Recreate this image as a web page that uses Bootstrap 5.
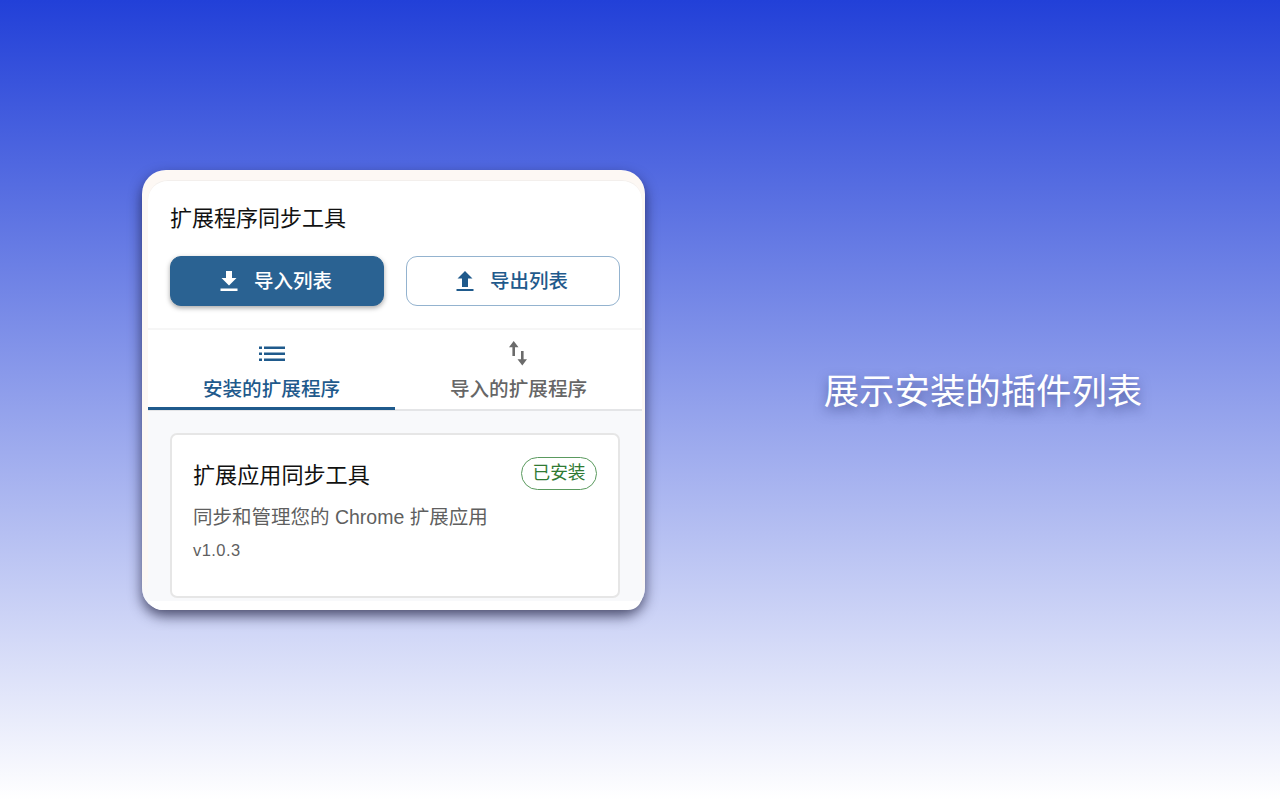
<!DOCTYPE html>
<html lang="zh-CN">
<head>
<meta charset="utf-8">
<title>扩展程序同步工具</title>
<link href="https://cdn.jsdelivr.net/npm/bootstrap@5.3.0/dist/css/bootstrap.min.css" rel="stylesheet">
<style>
html,body{height:100%}
body{font-family:"Liberation Sans","Noto Sans CJK SC",sans-serif;background:linear-gradient(180deg,#2240d8 0%,#ffffff 100%);overflow:hidden}
.stage{width:1280px;height:800px;padding:170px 0 190px 142px}
.shell{width:503px;height:440px;flex:none;background:linear-gradient(180deg,#fdf8f4 0%,#fdf8f4 92%,#f8f9fb 97%);border-radius:24px 24px 22px 22px;padding:10px 3px 0 6px;box-shadow:0 6px 13px rgba(15,15,45,.68)}
.pane{background:#fff;height:100%;border-top:1px solid #f3efec;overflow:hidden;border-radius:20px 20px 14px 14px}
.head-zone{padding:0 22px 22px;height:149px;border-bottom:2px solid #f6f6f6}
.app-title{font-size:22px;line-height:30px;color:#111;padding-top:23px;margin:0 0 22px;font-weight:400}
.act-row{gap:22px}
.act-btn{width:214px;height:50px;font-size:19.5px;font-weight:500;border-radius:11px;gap:16px;padding:0 2px 0 0}
.act-label{padding-top:2px}
.act-fill{background:#2a6292;color:#fff;border:1px solid #2a6292;box-shadow:0 2px 5px rgba(0,0,0,.35)}
.act-fill:hover{background:#2a6292;color:#fff}
.act-line{background:#fff;color:#1f5a8c;border:1.5px solid #94b3cf}
.tab-row{height:81px;border-bottom:2px solid #e4e5e7;background:#fff}
.tab-item{flex:0 0 50%;height:80px;color:#666;font-size:19.6px;font-weight:500;border-bottom:3px solid transparent;padding-top:9px;line-height:26px}
.tab-item.on{color:#1f5a8c;border-bottom-color:#1f5a8c}
.tab-glyph{height:28px;margin-bottom:9px}
.body-zone{background:#f8f9fb;padding:22px 22px 0;height:190px}
.app-card{width:450px;height:165px;background:#fff;border:2px solid #e6e6e6;border-radius:7px;padding:22px 21px 0}
.app-name{font-size:22.1px;line-height:30px;color:#111;margin:4px 0 0;font-weight:400}
.state-tag{width:76px;height:33px;font-size:17.7px;line-height:1;color:#2f7a33;border:1.5px solid #5a9a5e;border-radius:17px}
.app-desc{font-size:19.5px;line-height:28px;color:#5f5f5f;margin:12px 0 0}
.app-ver{font-size:16.5px;line-height:22px;color:#5f5f5f;margin:8px 0 0;letter-spacing:.45px}
.hero-text{flex:1;padding:4px 0 0 41px;text-align:center;font-size:35.4px;line-height:44px;color:#fff;text-shadow:0 5px 12px rgba(20,30,90,.55)}
</style>
</head>
<body>
<div class="stage d-flex align-items-center">
  <div class="shell">
    <div class="pane">
      <div class="head-zone">
        <h1 class="app-title">扩展程序同步工具</h1>
        <div class="d-flex act-row">
          <button class="btn act-btn act-fill d-flex align-items-center justify-content-center" type="button">
            <svg width="18" height="20" viewBox="0 0 18 20" aria-hidden="true"><path fill="#fff" d="M6 0h6v7h4.500L9 14.500 1.500 7H6zM.5 17.500h17V20H.5z"/></svg>
            <span class="act-label">导入列表</span>
          </button>
          <button class="btn act-btn act-line d-flex align-items-center justify-content-center" type="button">
            <svg width="18" height="20" viewBox="0 0 18 20" aria-hidden="true"><path fill="#1f5a8c" d="M9 0l7.500 7.500H12V16H6V7.500H1.500zM.5 18h17v2H.5z"/></svg>
            <span class="act-label">导出列表</span>
          </button>
        </div>
      </div>
      <div class="tab-row d-flex">
        <div class="tab-item on text-center">
          <div class="tab-glyph d-flex align-items-center justify-content-center">
            <svg width="26" height="15" viewBox="0 0 26 15" aria-hidden="true"><path fill="#1f5a8c" d="M0 .5h3V3H0zM5 .5h21V3H5zM0 6.500h3V9H0zM5 6.500h21V9H5zM0 12.500h3V15H0zM5 12.500h21V15H5z"/></svg>
          </div>
          安装的扩展程序
        </div>
        <div class="tab-item text-center">
          <div class="tab-glyph d-flex align-items-center justify-content-center">
            <svg width="20" height="25" viewBox="0 0 20 25" aria-hidden="true"><path fill="#6b6b6b" d="M4.700 0l4.800 6.200H6V15H3.400V6.200H0zM12 10h2.600v8.300H18l-4.700 6.200-4.800-6.200H12z"/></svg>
          </div>
          导入的扩展程序
        </div>
      </div>
      <div class="body-zone">
        <div class="app-card">
          <div class="d-flex justify-content-between align-items-start">
            <h2 class="app-name">扩展应用同步工具</h2>
            <span class="state-tag d-flex align-items-center justify-content-center">已安装</span>
          </div>
          <p class="app-desc">同步和管理您的 Chrome 扩展应用</p>
          <p class="app-ver">v1.0.3</p>
        </div>
      </div>
    </div>
  </div>
  <div class="hero-text">展示安装的插件列表</div>
</div>
<script src="https://cdn.jsdelivr.net/npm/bootstrap@5.3.0/dist/js/bootstrap.bundle.min.js"></script>
</body>
</html>
